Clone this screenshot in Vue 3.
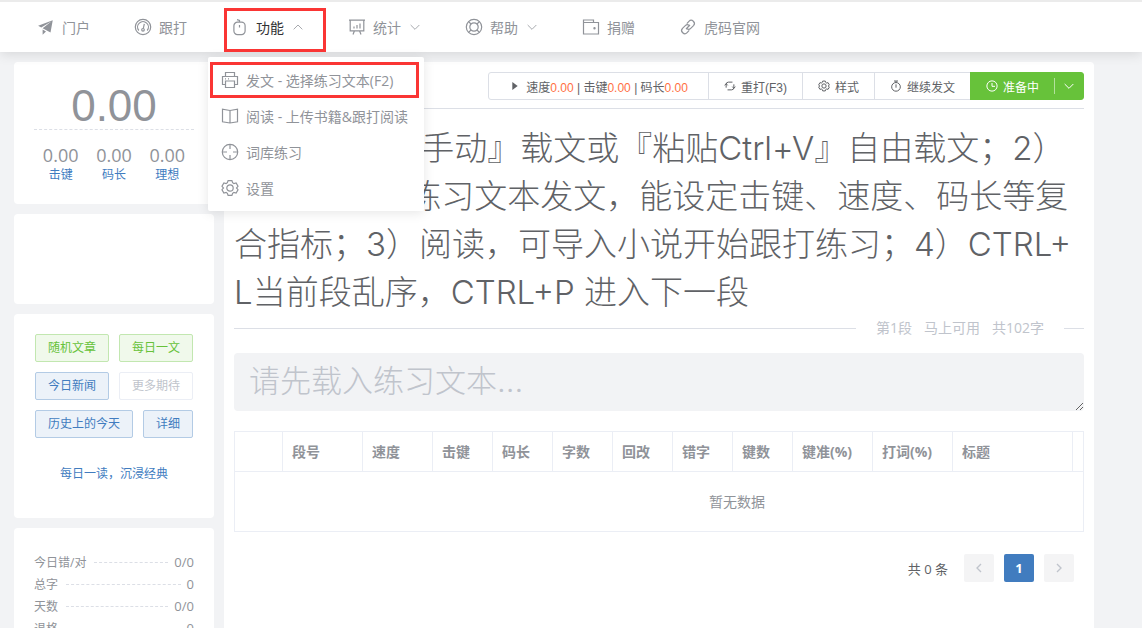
<script setup>
import { ref } from 'vue'

const nav = [
  { label: '门户', icon: 'plane' },
  { label: '跟打', icon: 'gauge' },
  { label: '功能', icon: 'mouse', arrow: 'up', open: true },
  { label: '统计', icon: 'board', arrow: 'down' },
  { label: '帮助', icon: 'help', arrow: 'down' },
  { label: '捐赠', icon: 'wallet' },
  { label: '虎码官网', icon: 'link' }
]
const menu = [
  { label: '发文 - 选择练习文本(F2)', icon: 'printer', marked: true },
  { label: '阅读 - 上传书籍&跟打阅读', icon: 'book' },
  { label: '词库练习', icon: 'aim' },
  { label: '设置', icon: 'gear' }
]

const icons = {
  plane: '<path fill="currentColor" stroke="none" transform="scale(.017578)" d="m64 448 832-320-128 704-446.08-243.328L832 192 242.816 545.536 64 448zm256 512V657.024L512 768 320 960z"/>',
  gear: '<path d="M7.1 1.6h3.8l.7 2.1 1.3.8 2.2-.5 1.9 3.3L15.5 9l1.5 1.7-1.9 3.3-2.2-.5-1.3.8-.7 2.100H7.100l-.7-2.100-1.300-.8-2.200.5L1 10.700 2.500 9 1 7.300 2.900 4l2.200.5 1.300-.8z"/><circle cx="9" cy="9" r="3.200"/>',
  gauge: '<circle cx="9" cy="9" r="7.700"/><path d="M4.800 12.500a5.400 5.400 0 1 1 8.400 0M10.300 5.800 9.300 10.500"/><circle cx="9" cy="11.800" r="1.300"/>',
  mouse: '<path d="M7 4.200h3.500a3.600 3.600 0 0 1 3.600 3.600v5.200a3.600 3.600 0 0 1-3.600 3.600H6.500A3.600 3.600 0 0 1 2.900 13V7.800a3.600 3.600 0 0 1 3.600-3.600zM8.500 7v2.500M8.500 4.200V2.400L6 1.600"/>',
  board: '<path d="M1 2.200h16M2.200 2.200v10.600h13.600V2.200M6.500 12.800 5 16.500M11.500 12.800l1.500 3.700M6 8.500v2M9 7v3.500M12 5.500v5"/>',
  help: '<circle cx="9" cy="9" r="7.700"/><circle cx="9" cy="9" r="4.200"/><path d="m3.600 3.600 2.400 2.400M12 12l2.400 2.400M3.600 14.400 6 12M12 6l2.400-2.400"/>',
  wallet: '<path d="M11.500 4.500V2H1.500v14h15V4.500H1.500"/><circle cx="12.500" cy="10.300" r=".6" fill="currentColor"/>',
  link: '<path d="m7.800 5.600 2.100-2.200a3 3 0 0 1 4.600 4.200l-2.800 2.800a3 3 0 0 1-3.800.4M10.200 12.400l-2.100 2.200a3 3 0 0 1-4.600-4.200l2.800-2.800a3 3 0 0 1 3.800-.4M7 11l4-4"/>',
  printer: '<path d="M4.500 5.500v-4h9v4M4.500 13.500h-3v-8h15v8h-3M4.500 10h9v6.500h-9zM4 7.800h1M7 7.800h1"/>',
  book: '<path d="M9 3.500 1.500 2.200v12.600L9 16l7.500-1.200V2.200zM9 3.500V16"/>',
  aim: '<circle cx="9" cy="9" r="7.700"/><path d="M9 1.300V6M9 12v4.700M1.300 9H6M12 9h4.700"/>',
  refresh: '<path d="M3.200 11.500V6.500a3.500 3.500 0 0 1 3.500-3.300h6M1 8l2.200-2.500L5.500 8M14.800 6.500v5a3.500 3.500 0 0 1-3.500 3.300h-6M17 10l-2.200 2.500L12.500 10"/>',
  timer: '<circle cx="9" cy="10.300" r="6.500"/><path d="M9 6.500v5M6 1.500h6M9 1.500v2.300"/>',
  clock: '<circle cx="9" cy="9" r="7.700"/><path d="M9 4.500V9.500h4.500"/>',
  play: '<path d="M5 3v12l8-6z" fill="currentColor" stroke="none"/>',
  down: '<path d="m2.500 6 6.500 6.500L15.500 6"/>',
  up: '<path d="M2.500 12.500 9 6l6.500 6.500"/>',
  left: '<path d="M12 3 6 9l6 6"/>',
  right: '<path d="m6 3 6 6-6 6"/>'
}

const stats = ['击键', '码长', '理想']
const daily = [
  { label: '随机文章', kind: 'success' },
  { label: '每日一文', kind: 'success' },
  { label: '今日新闻', kind: 'primary' },
  { label: '更多期待', kind: 'muted' },
  { label: '历史上的今天', kind: 'primary' },
  { label: '详细', kind: 'primary' }
]
const totals = [
  { label: '今日错/对', value: '0/0' },
  { label: '总字', value: '0' },
  { label: '天数', value: '0/0' },
  { label: '退格', value: '0' }
]
const lines = [
  '1）可以用 『手动』载文或『粘贴Ctrl+V』自由载文；2）',
  '功能中选择 练习文本发文，能设定击键、速度、码长等复',
  '合指标；3）阅读，可导入小说开始跟打练习；4）CTRL+',
  'L当前段乱序，CTRL+P 进入下一段'
]
const columns = [
  ['', 48], ['段号', 80], ['速度', 70], ['击键', 60], ['码长', 60], ['字数', 60], ['回改', 60],
  ['错字', 60], ['键数', 60], ['键准(%)', 80], ['打词(%)', 80], ['标题', 120], ['', 166]
]
const typed = ref('')
</script>

<template>
  <div class="page">
    <header class="header">
      <nav class="nav">
        <div v-for="item in nav" :key="item.label" class="nav-item" :class="{ open: item.open }">
          <a href="#" class="nav-link">
            <svg class="icon" viewBox="0 0 18 18" v-html="icons[item.icon]"></svg>
            <span>{{ item.label }}</span>
            <svg v-if="item.arrow" class="arrow" viewBox="0 0 18 18" v-html="icons[item.arrow]"></svg>
          </a>
          <div v-if="item.open" class="dropdown">
            <a v-for="m in menu" :key="m.label" href="#" class="drop-link" :class="{ marked: m.marked }">
              <svg class="icon" viewBox="0 0 18 18" v-html="icons[m.icon]"></svg>
              <span>{{ m.label }}</span>
            </a>
          </div>
        </div>
      </nav>
    </header>

    <div class="layout">
      <aside class="side">
        <section class="card speed">
          <div class="display">0.00</div>
          <div class="stats">
            <div v-for="s in stats" :key="s" class="stat">
              <div class="stat-value">0.00</div>
              <div class="stat-label">{{ s }}</div>
            </div>
          </div>
        </section>
        <section class="card blank"></section>
        <section class="card daily">
          <div class="daily-buttons">
            <button v-for="d in daily" :key="d.label" type="button" class="small" :class="d.kind" :disabled="d.kind === 'muted'">{{ d.label }}</button>
          </div>
          <a href="#" class="motto">每日一读，沉浸经典</a>
        </section>
        <section class="card totals">
          <div v-for="t in totals" :key="t.label" class="total">
            <span>{{ t.label }}</span><i class="dash"></i><span class="total-value">{{ t.value }}</span>
          </div>
        </section>
      </aside>

      <main class="main">
        <div class="toolbar">
          <button type="button" class="tool result">
            <svg viewBox="0 0 18 18" v-html="icons.play"></svg>
            <span>速度<b>0.00</b> | 击键<b>0.00</b> | 码长<b>0.00</b></span>
          </button>
          <button type="button" class="tool"><svg viewBox="0 0 18 18" v-html="icons.refresh"></svg><span>重打(F3)</span></button>
          <button type="button" class="tool"><svg viewBox="0 0 18 18" v-html="icons.gear"></svg><span>样式</span></button>
          <button type="button" class="tool"><svg viewBox="0 0 18 18" v-html="icons.timer"></svg><span>继续发文</span></button>
          <button type="button" class="tool ready"><svg viewBox="0 0 18 18" v-html="icons.clock"></svg><span>准备中</span></button>
          <button type="button" class="tool caret" aria-label="更多"><svg viewBox="0 0 18 18" v-html="icons.down"></svg></button>
        </div>

        <div class="article">
          <div v-for="l in lines" :key="l">{{ l }}</div>
        </div>

        <div class="divider">
          <span>第1段</span><span>马上可用</span><span>共102字</span>
        </div>

        <textarea v-model="typed" class="input" rows="1" aria-label="跟打输入" placeholder="请先载入练习文本..."></textarea>

        <div class="table-wrap">
          <table>
            <colgroup><col v-for="(c, i) in columns" :key="i" :style="{ width: c[1] + 'px' }"></colgroup>
            <thead>
              <tr><th v-for="(c, i) in columns" :key="i" scope="col">{{ c[0] }}</th></tr>
            </thead>
            <tbody>
              <tr><td :colspan="columns.length">暂无数据</td></tr>
            </tbody>
          </table>
        </div>

        <div class="pager">
          <span class="count">共 0 条</span>
          <button type="button" disabled aria-label="上一页"><svg viewBox="0 0 18 18" v-html="icons.left"></svg></button>
          <button type="button" class="current">1</button>
          <button type="button" disabled aria-label="下一页"><svg viewBox="0 0 18 18" v-html="icons.right"></svg></button>
        </div>
      </main>
    </div>
  </div>
</template>

<style>
body {
  margin: 0;
  background: #f2f3f5;
}
</style>

<style scoped>
.page {
  display: flex;
  flex-direction: column;
  height: 100vh;
  overflow: hidden;
  background: #f2f3f5;
  color: #909399;
  font-family: "Open Sans", "Noto Sans CJK SC", sans-serif;
  font-size: 14px;
}
.page *,
.page *::before,
.page *::after {
  box-sizing: border-box;
}
a {
  color: inherit;
  text-decoration: none;
}
button {
  margin: 0;
  font-family: inherit;
  font-size: 12px;
  cursor: pointer;
}
svg {
  flex: none;
  fill: none;
  stroke: currentColor;
  stroke-width: 1.2;
}
.header {
  position: relative;
  z-index: 2;
  flex: none;
  border-top: 2px solid #ebebeb;
  background: #fff;
  box-shadow: 0 2px 12px rgba(0, 0, 0, 0.12);
}
.nav {
  display: flex;
  height: 50px;
  padding-left: 13px;
}
.nav-item {
  position: relative;
}
.nav-link {
  display: flex;
  align-items: center;
  height: 50px;
  padding: 0 20px;
  white-space: nowrap;
}
.open > .nav-link {
  color: #303133;
}
.open > .nav-link svg {
  color: #909399;
}
.open::after {
  content: "";
  position: absolute;
  inset: 6px -2px 0 17px;
  border: 3px solid #fa3534;
  pointer-events: none;
}
.icon {
  width: 18px;
  height: 18px;
  margin: 0 7px 0 4px;
}
.arrow {
  width: 12px;
  height: 12px;
  margin-left: 8px;
}
.dropdown {
  position: absolute;
  top: 55px;
  left: 1px;
  min-width: 216px;
  padding: 5px 0;
  border-radius: 2px;
  background: #fff;
  box-shadow: 0 2px 12px rgba(0, 0, 0, 0.1);
}
.drop-link {
  position: relative;
  display: flex;
  align-items: center;
  height: 36px;
  padding: 0 9px;
  white-space: nowrap;
}
.marked::after {
  content: "";
  position: absolute;
  inset: 0 5px 0 2px;
  border: 3px solid #fa3534;
}
.layout {
  display: flex;
  flex: 1;
  gap: 10px;
  min-height: 0;
  padding: 10px 48px 0 14px;
}
.side {
  display: flex;
  flex: none;
  flex-direction: column;
  gap: 10px;
  width: 200px;
}
.card {
  flex: none;
  border-radius: 4px;
  background: #fff;
}
.speed {
  height: 142px;
  padding: 20px 20px 0;
}
.display {
  height: 48px;
  border-bottom: 1px dashed #dcdfe6;
  font-family: "Liberation Sans", sans-serif;
  font-size: 44px;
  line-height: 48px;
  text-align: center;
}
.stats {
  display: grid;
  grid-template-columns: repeat(3, 1fr);
  padding-top: 13px;
  text-align: center;
}
.stat-value {
  font-size: 18px;
  line-height: 24px;
}
.stat-label {
  color: #417cbf;
  font-size: 12px;
  line-height: 16px;
}
.blank {
  height: 90px;
}
.daily {
  height: 204px;
  padding: 20px 20px 0;
  text-align: center;
}
.daily-buttons {
  display: flex;
  flex-wrap: wrap;
  justify-content: center;
  gap: 10px;
}
.small {
  height: 28px;
  padding: 0 12px;
  border: 1px solid;
  border-radius: 2px;
  line-height: 24px;
}
.success {
  border-color: #c2e7b0;
  background: #f0f9eb;
  color: #67c23a;
}
.primary {
  border-color: #b3cbe5;
  background: #ecf2f9;
  color: #417cbf;
}
.muted {
  border-color: #ebeef5;
  background: #fff;
  color: #c0c4cc;
}
.motto {
  display: block;
  margin-top: 26px;
  color: #417cbf;
  font-size: 12px;
  line-height: 20px;
}
.totals {
  padding: 23px 20px;
}
.total {
  display: flex;
  align-items: center;
  height: 22px;
  font-size: 12px;
}
.total-value {
  font-size: 13px;
}
.dash {
  flex: 1;
  margin: 0 6px 0 8px;
  border-top: 1px dashed #dcdfe6;
}
.main {
  flex: 1;
  min-width: 0;
  padding: 10px;
  border-radius: 4px 4px 0 0;
  background: #fff;
}
.toolbar {
  display: flex;
  justify-content: flex-end;
  padding-bottom: 8px;
  border-bottom: 1px solid #dcdfe6;
}
.tool {
  display: flex;
  align-items: center;
  gap: 5px;
  height: 28px;
  margin-left: -1px;
  padding: 0 15px;
  border: 1px solid #dcdfe6;
  background: #fff;
  color: #606266;
  font-family: "Liberation Sans", "Noto Sans CJK SC", sans-serif;
  white-space: nowrap;
}
.tool svg {
  width: 12px;
  height: 12px;
  stroke-width: 1.5;
}
.result {
  padding: 0 20px;
  border-radius: 3px 0 0 3px;
}
.tool b {
  color: #ff7043;
  font-weight: 400;
}
.ready,
.caret {
  border-color: #67c23a;
  background: #67c23a;
  color: #fff;
}
.caret {
  position: relative;
  padding: 0 8px;
  border-radius: 0 3px 3px 0;
}
.caret::before {
  content: "";
  position: absolute;
  top: 5px;
  bottom: 5px;
  left: -1px;
  border-left: 1px solid #b3e19d;
}
.article {
  padding-top: 15px;
  color: #606266;
  font-family: Inter, "Noto Sans CJK SC", sans-serif;
  font-size: 33px;
  font-weight: 300;
  line-height: 48px;
  white-space: nowrap;
}
.divider {
  display: flex;
  align-items: center;
  gap: 12px;
  height: 24px;
  color: #c0c4cc;
  line-height: 24px;
}
.divider::before,
.divider::after {
  content: "";
  border-top: 1px solid #dcdfe6;
}
.divider::before {
  flex: 1;
  margin-right: 8px;
}
.divider::after {
  width: 20px;
  margin-left: 8px;
}
.input {
  display: block;
  width: 100%;
  height: 58px;
  margin: 13px 0 20px;
  padding: 5px 15px;
  border: 0;
  border-radius: 4px;
  outline: 0;
  background: #f2f3f5;
  color: #606266;
  font-family: Inter, "Noto Sans CJK SC", sans-serif;
  font-size: 31px;
  font-weight: 300;
  line-height: 46px;
  resize: vertical;
}
.input::placeholder {
  color: #c0c4cc;
}
.table-wrap {
  overflow: hidden;
  border: 1px solid #ebeef5;
}
table {
  width: 1004px;
  border-collapse: separate;
  border-spacing: 0;
  table-layout: fixed;
}
th {
  height: 40px;
  padding: 0 9px 2px;
  border-right: 1px solid #ebeef5;
  border-bottom: 1px solid #ebeef5;
  font-weight: 700;
  text-align: left;
  white-space: nowrap;
}
td {
  height: 59px;
  padding: 0 0 2px;
  text-align: center;
}
.pager {
  display: flex;
  align-items: center;
  justify-content: flex-end;
  gap: 10px;
  padding: 22px 10px 0 0;
}
.count {
  margin-right: 6px;
  color: #606266;
  font-size: 13px;
}
.pager button {
  display: flex;
  align-items: center;
  justify-content: center;
  width: 30px;
  height: 28px;
  padding: 0;
  border: 0;
  border-radius: 2px;
  background: #f4f4f5;
  color: #c0c4cc;
}
.pager svg {
  width: 12px;
  height: 12px;
  stroke-width: 2;
}
.pager .current {
  background: #417cbf;
  color: #fff;
  font-size: 13px;
  font-weight: 700;
}
</style>
